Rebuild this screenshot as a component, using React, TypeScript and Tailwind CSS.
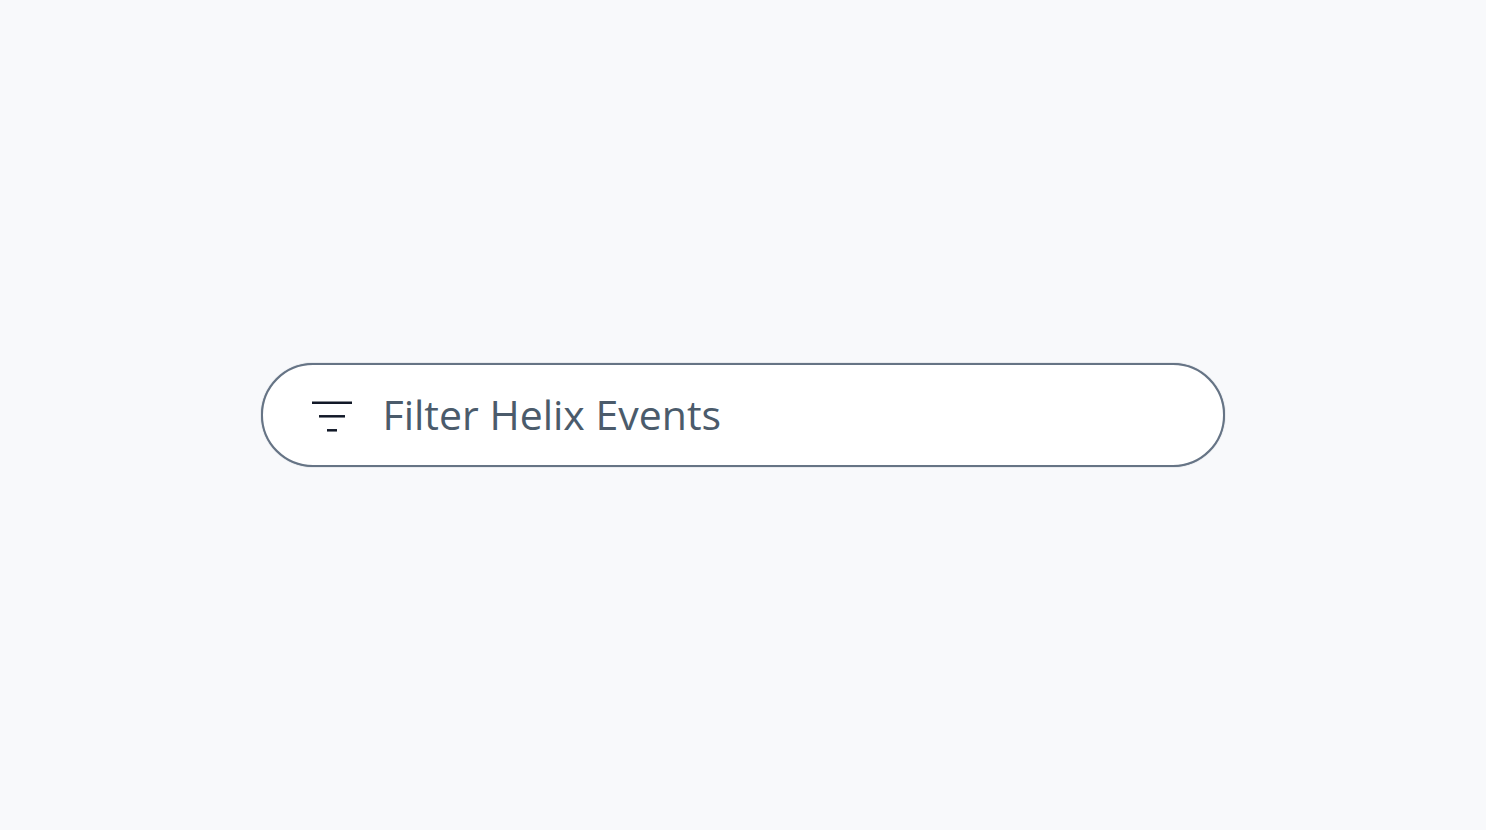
export default function App() {
  return (
    <div className="flex h-[830px] w-full items-center justify-center bg-[#f8f9fb] font-['Open_Sans',sans-serif]">
      <div className="ml-[-1px] flex h-[104px] w-[964px] items-center rounded-[52px] border-2 border-[#667485] bg-white pl-[49px] shadow-[0_0_1px_0_#667485]">
        <svg width="40" height="36" viewBox="0 0 40 36" fill="none" stroke="#111827" strokeWidth="2.5">
          <path d="M0 5.7H40" />
          <path d="M7 19.3H33" />
          <path d="M15 33.3H25" />
        </svg>
        <span className="mb-[2px] ml-[31px] text-[41px] leading-none text-[#4b5b6b]">Filter Helix Events</span>
      </div>
    </div>
  )
}
